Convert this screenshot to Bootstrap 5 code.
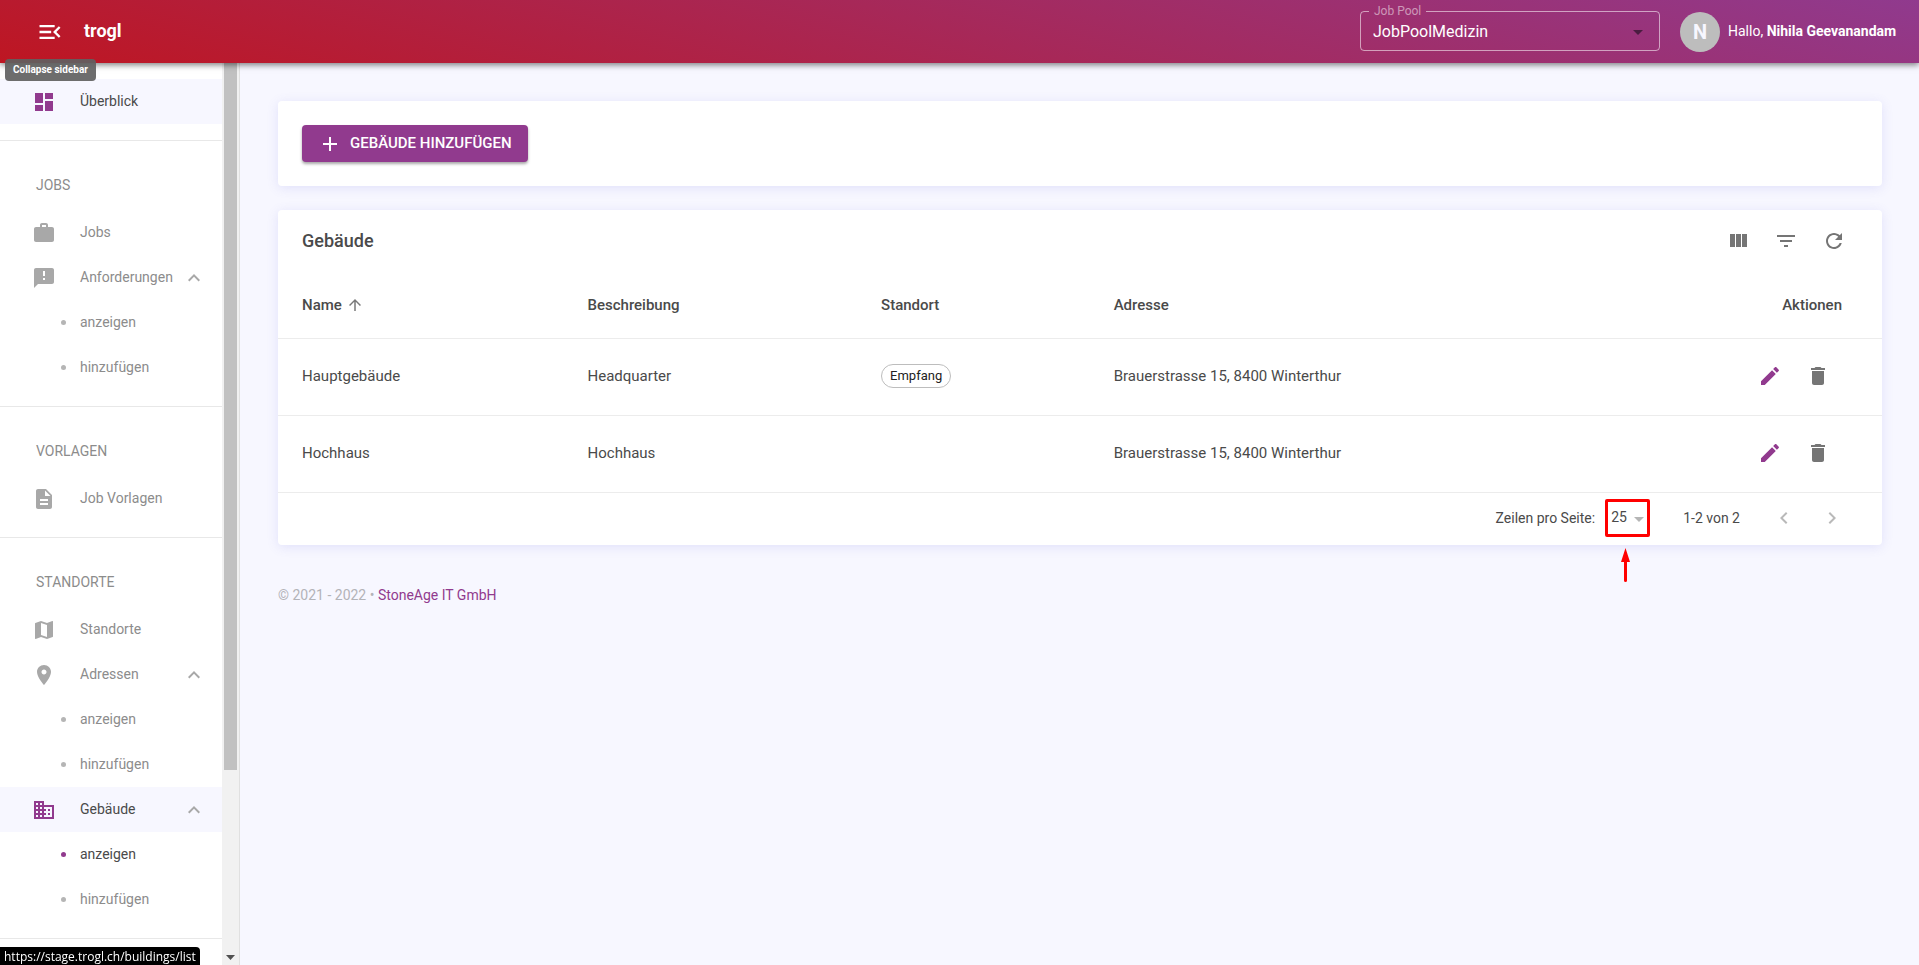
<!DOCTYPE html>
<html lang="de">
<head>
<meta charset="utf-8">
<meta name="viewport" content="width=device-width, initial-scale=1">
<title>trogl – Gebäude</title>
<link href="https://cdn.jsdelivr.net/npm/bootstrap@5.3.0/dist/css/bootstrap.min.css" rel="stylesheet">
<style>
  :root { --brand: #913a8e; --page: #f7f7ff; --ink: #4a4a4a; --muted: #8c8c8c; }
  body { font-family: Roboto, "Liberation Sans", sans-serif; font-size: 14px; line-height: 20px; color: var(--ink); background: var(--page); }
  svg { fill: currentColor; display: block; flex: none; }
  .ico { width: 24px; height: 24px; }

  .topbar { height: 63px; padding: 0 19px 0 36px; color: #fff; background: linear-gradient(15deg, #be1622, #903a8e); box-shadow: 0 2px 6px rgba(0,0,0,.5); z-index: 3; }
  .menu-toggle { color: #fff; }
  .menu-toggle svg { width: 28px; height: 28px; }
  .brand-name { font-size: 18px; font-weight: 700; margin-left: 20px; padding-bottom: 2px; color: #fff; }
  .hint { left: 5px; top: 59px; height: 22px; padding: 0 8px; font-size: 10px; line-height: 21px; font-weight: 700; background: rgba(97,97,97,.92); border-radius: 4px; }
  .pool { width: 300px; height: 47px; border: 1px solid rgba(255,255,255,.55); border-radius: 4px; padding: 0 12px; margin: 4px 20px 12px auto; min-width: 0; }
  .pool legend { float: none; width: auto; margin: 0 0 0 -4px; padding: 0 5px; font-size: 12px; line-height: 14px; color: rgba(255,255,255,.5); }
  .pool select { width: 100%; height: 28px; font-size: 16px; color: #fff; }
  .bare-select { appearance: none; border: 0; background: transparent; color: inherit; outline: 0; padding: 0; }
  .caret { pointer-events: none; width: 10px; height: 5px; }
  .pool .caret { color: #4a1c40; }
  .avatar { width: 40px; height: 40px; background: #bdbdbd; color: var(--page); font-size: 20px; font-weight: 700; }
  .greeting { min-width: 172px; padding-bottom: 2px; }

  .sidebar { width: 240px; background: #fff; border-right: 1px solid #e0e0e0; }
  .nav-section { padding: 16px 0; border-bottom: 1px solid #e8e8e8; }
  .nav-title { height: 53px; padding: 16px 36px; font-size: 14px; line-height: 24px; font-weight: 400; margin: 0; color: var(--muted); }
  .side-item { height: 45px; width: 100%; padding: 0 16px 0 32px; border: 0; background: none; color: var(--muted); text-decoration: none; text-align: left; display: flex; align-items: center; }
  .side-item .ico { color: #a8a8a8; }
  .side-item .ico:first-child { margin-right: 24px; }
  .side-item .chev { margin-left: auto; }
  .side-item span { padding-bottom: 2px; }
  .side-item.is-sub { padding-left: 61px; gap: 14px; }
  .side-item.is-sub::before { content: ""; width: 5px; height: 5px; border-radius: 50%; background: #b5b5b5; }
  .side-item.is-open { background: var(--page); color: var(--ink); }
  .side-item.is-open .lead-ico { color: var(--brand); }
  .side-item.is-current { color: var(--ink); }
  .side-item.is-current::before { background: var(--brand); }
  .track { width: 17px; background: #f1f1f1; padding: 0 2px; }
  .track .thumb { background: #c1c1c1; height: 78.4%; }
  .track svg { width: 9px; height: 5px; margin: auto auto 5px; color: #505050; }
  .status { left: 0; bottom: 0; height: 18px; padding: 0 4px; background: #000; color: #fff; font: 12px/19px "Open Sans", "Noto Sans", sans-serif; border-radius: 0 4px 0 0; z-index: 4; }

  main { padding: 38px 37px 38px 38px; }
  .panel { background: #fff; border-radius: 4px; box-shadow: 0 2px 12px rgba(90,90,220,.14); }
  .btn-add { height: 37px; background: var(--brand); color: #fff; font-size: 15px; font-weight: 500; border: 0; border-radius: 4px; padding: 0 16px; box-shadow: 0 2px 3px rgba(0,0,0,.35); }
  .btn-add:hover { background: #7b2f79; color: #fff; }
  .tools { height: 62px; padding: 0 24px; }
  .tools h1 { font-size: 18px; font-weight: 500; line-height: 24px; margin: 0; }
  .icon-btn { width: 48px; height: 48px; border: 0; background: none; padding: 0; color: #757575; display: inline-flex; align-items: center; justify-content: center; }
  .icon-btn.is-edit { color: var(--brand); }
  .icon-btn:disabled { color: #b9b9b9; }
  .data-table { font-size: 15px; --bs-table-bg: transparent; --bs-table-color: var(--ink); color: var(--ink); table-layout: fixed; border-color: #ececec; }
  .data-table th, .data-table td { padding: 0 16px; vertical-align: middle; color: var(--ink); }
  .data-table th:first-child, .data-table td:first-child { padding-left: 24px; }
  .data-table th:last-child, .data-table td:last-child { padding-right: 40px; text-align: right; }
  .data-table th { height: 66px; font-weight: 500; }
  .data-table td { height: 77px; padding-bottom: 2px; }
  .sort-ico { width: 18px; height: 18px; color: #7a7a7a; }
  .chip { display: inline-block; height: 24px; line-height: 22px; font-size: 13px; padding: 0 8px; border: 1px solid #bdbdbd; border-radius: 12px; color: #222; }
  .pager { min-height: 52px; padding: 0 26px 2px 0; }
  .per-page { width: 45px; height: 38px; margin: 0 33px 0 10px; }
  .per-page select { width: 100%; height: 100%; padding: 0 0 2px 6px; }
  .per-page .caret { right: 6px; top: 18px; color: #b5b5b5; }
  .callout-box { inset: 0; border: 3px solid #f00; border-radius: 2px; pointer-events: none; }
  .callout-arrow { left: 16px; top: 49px; width: 9px; height: 34px; color: #f00; }
  .range { margin-right: 20px; }
  .page-foot { padding-top: 32px; color: #b3b3b8; }
  .page-foot a { color: var(--brand); text-decoration: none; }
</style>
</head>
<body class="vh-100 d-flex flex-column overflow-hidden">

<header class="topbar d-flex align-items-center position-relative flex-shrink-0">
  <button class="menu-toggle btn p-0 border-0" type="button" aria-label="Collapse sidebar">
    <svg viewBox="0 0 24 24"><path d="M3 18h13v-2H3v2zm0-5h10v-2H3v2zm0-7v2h13V6H3zm18 9.59L17.42 12 21 8.41 19.59 7l-5 5 5 5L21 15.59z"/></svg>
  </button>
  <a href="#" class="brand-name text-decoration-none">trogl</a>
  <div class="hint position-absolute" role="tooltip">Collapse sidebar</div>
  <fieldset class="pool">
    <legend><label for="pool">Job Pool</label></legend>
    <div class="d-flex align-items-center">
      <select id="pool" class="bare-select"><option>JobPoolMedizin</option></select>
      <svg class="caret me-1" viewBox="0 0 10 5"><path d="M0 0h10L5 5z"/></svg>
    </div>
  </fieldset>
  <div class="d-flex align-items-center gap-2">
    <div class="avatar rounded-circle d-flex align-items-center justify-content-center">N</div>
    <div class="greeting">Hallo, <strong>Nihila Geevanandam</strong></div>
  </div>
</header>

<div class="d-flex flex-grow-1 overflow-hidden">
  <aside class="sidebar d-flex flex-shrink-0">
    <nav class="flex-grow-1 overflow-hidden">
      <div class="nav-section">
        <a href="#" class="side-item is-open"><svg class="ico lead-ico" viewBox="0 0 24 24"><path d="M3 13h8V3H3v10zm0 8h8v-6H3v6zm10 0h8V11h-8v10zm0-18v6h8V3h-8z"/></svg><span>Überblick</span></a>
      </div>
      <div class="nav-section">
        <h2 class="nav-title">JOBS</h2>
        <a href="#" class="side-item"><svg class="ico" viewBox="0 0 24 24"><path d="M20 6h-4V4c0-1.11-.89-2-2-2h-4c-1.11 0-2 .89-2 2v2H4c-1.11 0-1.99.89-1.99 2L2 19c0 1.11.89 2 2 2h16c1.11 0 2-.89 2-2V8c0-1.11-.89-2-2-2zm-6 0h-4V4h4v2z"/></svg><span>Jobs</span></a>
        <button type="button" class="side-item"><svg class="ico" viewBox="0 0 24 24"><path d="M20 2H4c-1.1 0-1.99.9-1.99 2L2 22l4-4h14c1.1 0 2-.9 2-2V4c0-1.1-.9-2-2-2zm-7 12h-2v-2h2v2zm0-4h-2V5h2v5z"/></svg><span>Anforderungen</span><svg class="ico chev" viewBox="0 0 24 24"><path d="M12 8l-6 6 1.41 1.41L12 10.83l4.59 4.58L18 14z"/></svg></button>
        <a href="#" class="side-item is-sub"><span>anzeigen</span></a>
        <a href="#" class="side-item is-sub"><span>hinzufügen</span></a>
      </div>
      <div class="nav-section">
        <h2 class="nav-title">VORLAGEN</h2>
        <a href="#" class="side-item"><svg class="ico" viewBox="0 0 24 24"><path d="M14 2H6c-1.1 0-1.99.9-1.99 2L4 20c0 1.1.89 2 1.99 2H18c1.1 0 2-.9 2-2V8l-6-6zm2 16H8v-2h8v2zm0-4H8v-2h8v2zm-3-5V3.5L18.5 9H13z"/></svg><span>Job Vorlagen</span></a>
      </div>
      <div class="nav-section">
        <h2 class="nav-title">STANDORTE</h2>
        <a href="#" class="side-item"><svg class="ico" viewBox="0 0 24 24"><path d="M20.5 3l-.16.03L15 5.1 9 3 3.36 4.9c-.21.07-.36.25-.36.48V20.5c0 .28.22.5.5.5l.16-.03L9 18.9l6 2.1 5.64-1.9c.21-.07.36-.25.36-.48V3.5c0-.28-.22-.5-.5-.5zM15 19l-6-2.11V5l6 2.11V19z"/></svg><span>Standorte</span></a>
        <button type="button" class="side-item"><svg class="ico" viewBox="0 0 24 24"><path d="M12 2C8.13 2 5 5.13 5 9c0 5.25 7 13 7 13s7-7.75 7-13c0-3.87-3.13-7-7-7zm0 9.5c-1.38 0-2.5-1.12-2.5-2.5s1.12-2.5 2.5-2.5 2.5 1.12 2.5 2.5-1.12 2.5-2.5 2.5z"/></svg><span>Adressen</span><svg class="ico chev" viewBox="0 0 24 24"><path d="M12 8l-6 6 1.41 1.41L12 10.83l4.59 4.58L18 14z"/></svg></button>
        <a href="#" class="side-item is-sub"><span>anzeigen</span></a>
        <a href="#" class="side-item is-sub"><span>hinzufügen</span></a>
        <button type="button" class="side-item is-open"><svg class="ico lead-ico" viewBox="0 0 24 24"><path d="M12 7V3H2v18h20V7H12zM6 19H4v-2h2v2zm0-4H4v-2h2v2zm0-4H4V9h2v2zm0-4H4V5h2v2zm4 12H8v-2h2v2zm0-4H8v-2h2v2zm0-4H8V9h2v2zm0-4H8V5h2v2zm10 12h-8v-2h2v-2h-2v-2h2v-2h-2V9h8v10zm-2-8h-2v2h2v-2zm0 4h-2v2h2v-2z"/></svg><span>Gebäude</span><svg class="ico chev" viewBox="0 0 24 24"><path d="M12 8l-6 6 1.41 1.41L12 10.83l4.59 4.58L18 14z"/></svg></button>
        <a href="#" class="side-item is-sub is-current"><span>anzeigen</span></a>
        <a href="#" class="side-item is-sub"><span>hinzufügen</span></a>
      </div>
    </nav>
    <div class="track d-flex flex-column flex-shrink-0" aria-hidden="true">
      <div class="thumb"></div>
      <svg viewBox="0 0 9 5"><path d="M0 0h9L4.5 5z"/></svg>
    </div>
  </aside>

  <main class="flex-grow-1 overflow-auto">
    <section class="panel p-4 mb-4">
      <button type="button" class="btn btn-add d-inline-flex align-items-center gap-2">
        <svg class="ico" viewBox="0 0 24 24"><path d="M19 13h-6v6h-2v-6H5v-2h6V5h2v6h6v2z"/></svg>GEBÄUDE HINZUFÜGEN
      </button>
    </section>

    <section class="panel">
      <div class="tools d-flex align-items-center justify-content-between">
        <h1>Gebäude</h1>
        <div class="d-flex">
          <button type="button" class="icon-btn" aria-label="Spalten"><svg class="ico" viewBox="0 0 24 24"><path d="M4 5h5v13H4zM10 5h5v13h-5zM16 5h5v13h-5z"/></svg></button>
          <button type="button" class="icon-btn" aria-label="Filter"><svg class="ico" viewBox="0 0 24 24"><path d="M10 18h4v-2h-4v2zM3 6v2h18V6H3zm3 7h12v-2H6v2z"/></svg></button>
          <button type="button" class="icon-btn" aria-label="Aktualisieren"><svg class="ico" viewBox="0 0 24 24"><path d="M17.65 6.35C16.2 4.9 14.21 4 12 4c-4.42 0-7.99 3.58-7.99 8s3.57 8 7.99 8c3.73 0 6.84-2.55 7.73-6h-2.08c-.82 2.33-3.04 4-5.65 4-3.31 0-6-2.69-6-6s2.69-6 6-6c1.66 0 3.14.69 4.22 1.78L13 11h7V4l-2.35 2.35z"/></svg></button>
        </div>
      </div>
      <table class="table data-table mb-0">
        <colgroup><col style="width:18.3%"><col style="width:18.3%"><col style="width:14.5%"><col><col style="width:14%"></colgroup>
        <thead>
          <tr>
            <th scope="col"><span class="d-flex align-items-center gap-1">Name <svg class="sort-ico" viewBox="0 0 24 24"><path d="M4 12l1.41 1.41L11 7.83V20h2V7.83l5.58 5.59L20 12l-8-8-8 8z"/></svg></span></th>
            <th scope="col">Beschreibung</th><th scope="col">Standort</th><th scope="col">Adresse</th><th scope="col">Aktionen</th>
          </tr>
        </thead>
        <tbody>
          <tr>
            <td>Hauptgebäude</td><td>Headquarter</td><td><span class="chip">Empfang</span></td><td>Brauerstrasse 15, 8400 Winterthur</td>
            <td><div class="d-flex justify-content-end">
              <button type="button" class="icon-btn is-edit" aria-label="Bearbeiten"><svg class="ico" viewBox="0 0 24 24"><path d="M3 17.25V21h3.75L17.81 9.94l-3.75-3.75L3 17.25zM20.71 7.04c.39-.39.39-1.02 0-1.41l-2.34-2.34c-.39-.39-1.02-.39-1.41 0l-1.83 1.83 3.75 3.75 1.83-1.83z"/></svg></button>
              <button type="button" class="icon-btn" aria-label="Löschen"><svg class="ico" viewBox="0 0 24 24"><path d="M6 19c0 1.1.9 2 2 2h8c1.1 0 2-.9 2-2V7H6v12zM19 4h-3.5l-1-1h-5l-1 1H5v2h14V4z"/></svg></button>
            </div></td>
          </tr>
          <tr>
            <td>Hochhaus</td><td>Hochhaus</td><td></td><td>Brauerstrasse 15, 8400 Winterthur</td>
            <td><div class="d-flex justify-content-end">
              <button type="button" class="icon-btn is-edit" aria-label="Bearbeiten"><svg class="ico" viewBox="0 0 24 24"><path d="M3 17.25V21h3.75L17.81 9.94l-3.75-3.75L3 17.25zM20.71 7.04c.39-.39.39-1.02 0-1.41l-2.34-2.34c-.39-.39-1.02-.39-1.41 0l-1.83 1.83 3.75 3.75 1.83-1.83z"/></svg></button>
              <button type="button" class="icon-btn" aria-label="Löschen"><svg class="ico" viewBox="0 0 24 24"><path d="M6 19c0 1.1.9 2 2 2h8c1.1 0 2-.9 2-2V7H6v12zM19 4h-3.5l-1-1h-5l-1 1H5v2h14V4z"/></svg></button>
            </div></td>
          </tr>
        </tbody>
      </table>
      <div class="pager d-flex align-items-center justify-content-end">
        <label for="rows">Zeilen pro Seite:</label>
        <div class="per-page position-relative">
          <select id="rows" class="bare-select"><option>25</option></select>
          <svg class="caret position-absolute" viewBox="0 0 10 5"><path d="M0 0h10L5 5z"/></svg>
          <span class="callout-box position-absolute"></span>
          <svg class="callout-arrow position-absolute" viewBox="0 0 9 34"><path d="M4.5 0L9 14H6v18.5a1.5 1.5 0 0 1-3 0V14H0z"/></svg>
        </div>
        <span class="range">1-2 von 2</span>
        <button type="button" class="icon-btn" disabled aria-label="Vorherige Seite"><svg class="ico" viewBox="0 0 24 24"><path d="M15.41 7.41L14 6l-6 6 6 6 1.41-1.41L10.83 12z"/></svg></button>
        <button type="button" class="icon-btn" disabled aria-label="Nächste Seite"><svg class="ico" viewBox="0 0 24 24"><path d="M10 6L8.59 7.41 13.17 12l-4.58 4.59L10 18l6-6z"/></svg></button>
      </div>
    </section>

    <footer class="page-foot mt-2">© 2021 - 2022 • <a href="#">StoneAge IT GmbH</a></footer>
  </main>
</div>

<div class="status position-fixed">https://stage.trogl.ch/buildings/list</div>
<script src="https://cdn.jsdelivr.net/npm/bootstrap@5.3.0/dist/js/bootstrap.bundle.min.js"></script>
</body>
</html>
